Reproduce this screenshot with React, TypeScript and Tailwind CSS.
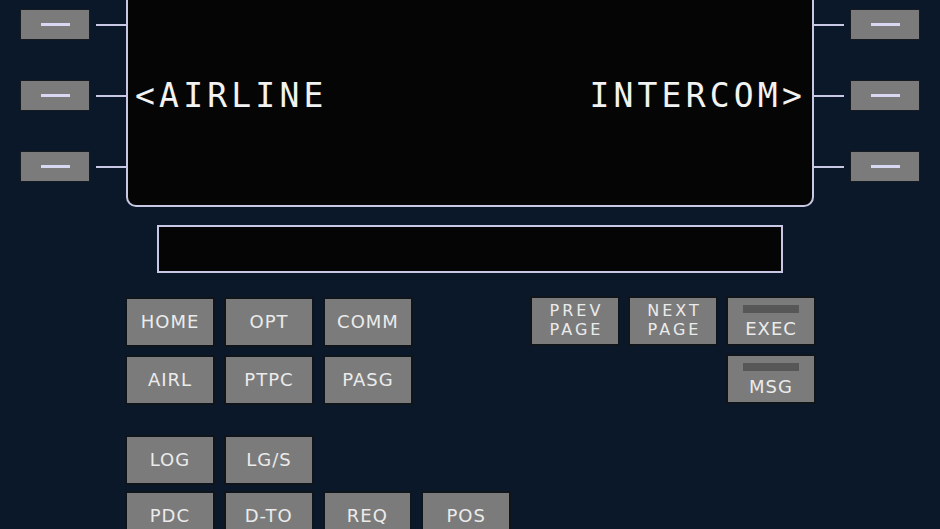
import React from "react";

const SANS = "font-['DejaVu_Sans',sans-serif]";

function Lsk() {
  return (
    <div className="flex h-[29px] w-[68px] items-center justify-center bg-[#7b7b7b] shadow-[0_0_0_1px_#161a21]">
      <div className="h-[3px] w-[29px] bg-[#d9d8f2]" />
    </div>
  );
}

function Key({ label, lines, light }: { label?: string; lines?: [string, string]; light?: boolean }) {
  return (
    <div
      className={`flex h-[46px] w-[86px] flex-col items-center justify-center bg-[#7b7b7b] text-[#ebebeb] shadow-[0_0_0_2px_#10141b] ${SANS}`}
    >
      {light && <div className="mb-[7px] h-[8px] w-[56px] bg-[#575757]" />}
      {lines ? (
        <div className="flex flex-col items-center pl-[3px] text-[16px] leading-[18.7px] tracking-[3px]">
          <span>{lines[0]}</span>
          <span>{lines[1]}</span>
        </div>
      ) : (
        <span className="text-[18px] leading-none tracking-[1px]">{label}</span>
      )}
    </div>
  );
}

const screenRows: [string, string][] = [
  ["", ""],
  ["<AIRLINE", "INTERCOM>"],
  ["", ""],
];

export default function App() {
  return (
    <div className="h-[529px] w-[940px] overflow-hidden bg-[#0a1829]">
      {/* display + line select keys */}
      <div className="flex items-start">
        <div className="flex w-[126px] flex-col gap-[42px] pt-[10px]">
          {[0, 1, 2].map((i) => (
            <div key={i} className="flex h-[29px] items-center pl-[21px]">
              <Lsk />
              <div className="ml-[7px] h-[2px] w-[30px] bg-[#c9c8e4]" />
            </div>
          ))}
        </div>

        <div className="flex h-[207px] w-[688px] flex-col gap-[42px] rounded-b-[10px] border-2 border-t-0 border-[#c9c8e4] bg-[#050505] pt-[10px]">
          {screenRows.map(([l, r], i) => (
            <div
              key={i}
              className="flex h-[29px] items-center justify-between pl-[7px] pr-[6px] font-['DejaVu_Sans_Mono',monospace] text-[33px] leading-none tracking-[4.2px] text-[#f2f2f2]"
            >
              <span>{l}</span>
              <span>{r}</span>
            </div>
          ))}
        </div>

        <div className="flex flex-col gap-[42px] pt-[10px]">
          {[0, 1, 2].map((i) => (
            <div key={i} className="flex h-[29px] items-center">
              <div className="mr-[7px] h-[2px] w-[30px] bg-[#c9c8e4]" />
              <Lsk />
            </div>
          ))}
        </div>
      </div>

      {/* scratchpad */}
      <div className="ml-[157px] mt-[18px] h-[48px] w-[626px] border-2 border-[#c9c8e4] bg-[#050505]" />

      {/* keypad */}
      <div className="ml-[127px] mt-[26px] flex items-start">
        <div className="flex w-[382px] flex-col">
          <div className="flex gap-[13px]">
            <Key label="HOME" />
            <Key label="OPT" />
            <Key label="COMM" />
          </div>
          <div className="mt-[12px] flex gap-[13px]">
            <Key label="AIRL" />
            <Key label="PTPC" />
            <Key label="PASG" />
          </div>
          <div className="mt-[34px] flex gap-[13px]">
            <Key label="LOG" />
            <Key label="LG/S" />
          </div>
          <div className="mt-[10px] flex gap-[13px]">
            <Key label="PDC" />
            <Key label="D-TO" />
            <Key label="REQ" />
            <Key label="POS" />
          </div>
        </div>

        <div className="-mt-[1px] ml-[23px] flex flex-col items-end">
          <div className="flex gap-[12px]">
            <Key lines={["PREV", "PAGE"]} />
            <Key lines={["NEXT", "PAGE"]} />
            <Key label="EXEC" light />
          </div>
          <div className="mt-[12px]">
            <Key label="MSG" light />
          </div>
        </div>
      </div>
    </div>
  );
}
